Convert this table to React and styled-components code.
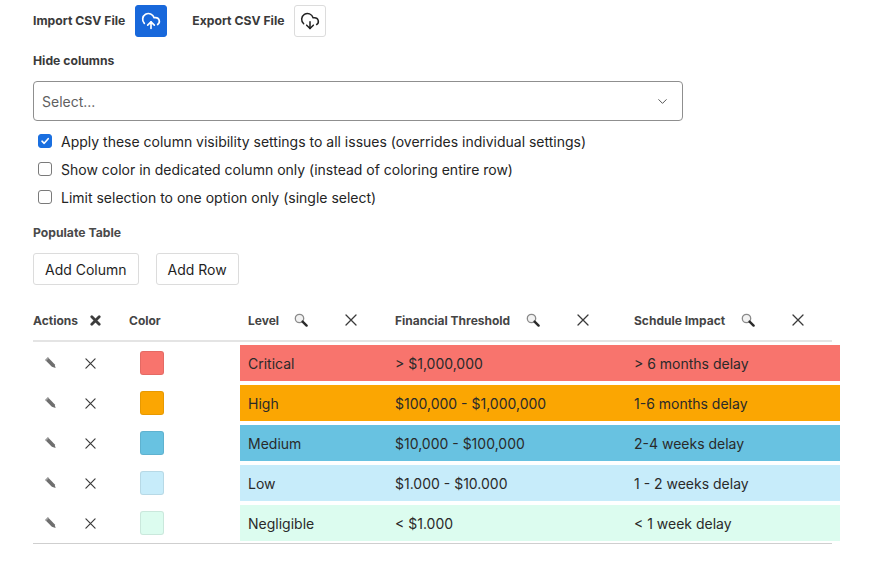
import React from "react";
import styled, { createGlobalStyle } from "styled-components";
import { CloudUpload, CloudDownload, ChevronDown } from "lucide-react";

const Global = createGlobalStyle`
  html, body { margin: 0; padding: 0; background: #fff; }
  body { font-family: Inter, "Noto Sans", sans-serif; color: #2b2b2b; }
  * { box-sizing: border-box; }
`;

const Page = styled.div`
  padding: 5px 0 0 33px;
  width: 886px;
`;

const TopBar = styled.div`
  display: flex;
  align-items: center;
  height: 32px;
`;

const SmallLabel = styled.div`
  font-size: 12.2px;
  font-weight: 700;
  color: ${(p) => (p.$muted ? "#4a4a4a" : "#3a3a3a")};
  line-height: 16px;
  margin-top: ${(p) => p.$mt || 0}px;
`;

const IconButton = styled.button`
  width: 32px;
  height: 32px;
  margin: 0 25px 0 10px;
  padding: 0;
  display: flex;
  align-items: center;
  justify-content: center;
  border-radius: 3px;
  border: 1px solid ${(p) => (p.$primary ? "#1868db" : "#dcdcdc")};
  background: ${(p) => (p.$primary ? "#1868db" : "#fff")};
  color: ${(p) => (p.$primary ? "#fff" : "#222")};
`;

const SelectBox = styled.div`
  margin-top: 12px;
  width: 650px;
  height: 40px;
  border: 1px solid #8f8f8f;
  border-radius: 4px;
  display: flex;
  align-items: center;
  justify-content: space-between;
  padding: 0 12px 0 8px;
  font-size: 14px;
  color: #5f5f5f;
`;

const CheckList = styled.div`
  margin-top: 6px;
  display: flex;
  flex-direction: column;
`;

const CheckRow = styled.label`
  display: flex;
  align-items: center;
  height: 28px;
  padding-left: 5px;
  font-size: 14px;
  color: #242424;
`;

const Box = styled.span`
  width: 14px;
  height: 14px;
  border-radius: 3px;
  margin-right: 9px;
  display: flex;
  align-items: center;
  justify-content: center;
  border: 1px solid ${(p) => (p.$checked ? "#1a6fe0" : "#7a7a7a")};
  background: ${(p) => (p.$checked ? "#1a6fe0" : "#fff")};
`;

const ButtonRow = styled.div`
  margin-top: 12px;
  display: flex;
  gap: 17px;
`;

const Button = styled.button`
  height: 32px;
  padding: 0 11px;
  font-family: Inter, sans-serif;
  font-size: 14px;
  color: #1f1f1f;
  background: #fff;
  border: 1px solid #dcdcdc;
  border-radius: 3px;
`;

const Table = styled.div`
  margin-top: 15px;
  width: 799px;
  border-bottom: 1.5px solid #cfcfcf;
`;

const cols = "47px 49px 111px 147px 239px 214px";

const HeaderRow = styled.div`
  display: grid;
  grid-template-columns: ${cols};
  height: 42px;
  align-items: center;
  border-bottom: 2px solid #e4e4e4;
  width: 799px;
`;

const HeadCell = styled.div`
  display: flex;
  align-items: center;
  padding-left: ${(p) => p.$pl || 0}px;
  font-size: 12px;
  font-weight: 700;
  color: #454545;
  white-space: nowrap;
`;

const Body = styled.div`
  padding-top: 1px;
`;

const Row = styled.div`
  display: grid;
  grid-template-columns: ${cols};
  width: 807px;
  padding: 2px 0;
`;

const Cell = styled.div`
  height: 36px;
  display: flex;
  align-items: center;
  padding-left: ${(p) => p.$pl || 0}px;
  background: ${(p) => p.$bg || "transparent"};
  font-size: 14px;
  color: #2a2a2a;
`;

const Swatch = styled.div`
  width: 24px;
  height: 24px;
  border-radius: 3px;
  background: ${(p) => p.$bg};
  border: 1px solid rgba(0, 0, 0, 0.08);
`;

const SearchWrap = styled.span`
  display: flex;
  margin-left: ${(p) => p.$ml}px;
`;

const CloseWrap = styled.span`
  display: flex;
  margin-left: 37px;
`;

const Search = () => (
  <svg width="14" height="14" viewBox="0 0 14 14">
    <circle cx="5.5" cy="5.5" r="4.2" fill="#f2f2f2" stroke="#8a8a8a" strokeWidth="1.3" />
    <line x1="8.6" y1="8.6" x2="12.6" y2="12.6" stroke="#2a2a2a" strokeWidth="2.4" strokeLinecap="round" />
  </svg>
);

const ThinX = ({ size = 12, color = "#3a3a3a" }) => (
  <svg width={size} height={size} viewBox="0 0 12 12">
    <path d="M1 1 L11 11 M11 1 L1 11" stroke={color} strokeWidth="1.3" strokeLinecap="round" />
  </svg>
);

const HeavyX = () => (
  <svg width="11" height="11" viewBox="0 0 11 11">
    <path d="M1.8 1.8 L9.2 9.2 M9.2 1.8 L1.8 9.2" stroke="#3d3d3d" strokeWidth="2.8" strokeLinecap="round" />
  </svg>
);

const Pencil = () => (
  <svg width="11" height="12" viewBox="0 0 11 12">
    <path d="M0.2 3 L2.9 0.3 L9.6 7.2 L10.6 11 L6.9 9.8 Z" fill="#6e6e6e" />
    <path d="M0.2 3 L2.9 0.3 L3.9 1.3 L1.2 4 Z" fill="#a0a0a0" />
  </svg>
);

const rows = [
  { level: "Critical", fin: "> $1,000,000", sch: "> 6 months delay", color: "#f8746d" },
  { level: "High", fin: "$100,000 - $1,000,000", sch: "1-6 months delay", color: "#fba602" },
  { level: "Medium", fin: "$10,000 - $100,000", sch: "2-4 weeks delay", color: "#68c2e1" },
  { level: "Low", fin: "$1.000 - $10.000", sch: "1 - 2 weeks delay", color: "#c7ecfa" },
  { level: "Negligible", fin: "< $1.000", sch: "< 1 week delay", color: "#dcfcef" },
];

const checks = [
  { text: "Apply these column visibility settings to all issues (overrides individual settings)", checked: true },
  { text: "Show color in dedicated column only (instead of coloring entire row)", checked: false },
  { text: "Limit selection to one option only (single select)", checked: false },
];

const ColHead = ({ label, ml }) => (
  <HeadCell $pl={8}>
    {label}
    <SearchWrap $ml={ml}><Search /></SearchWrap>
    <CloseWrap><ThinX /></CloseWrap>
  </HeadCell>
);

export default function App() {
  return (
    <Page>
      <Global />
      <TopBar>
        <SmallLabel>Import CSV File</SmallLabel>
        <IconButton $primary><CloudUpload size={20} strokeWidth={2} /></IconButton>
        <SmallLabel>Export CSV File</SmallLabel>
        <IconButton><CloudDownload size={20} strokeWidth={1.8} /></IconButton>
      </TopBar>
      <SmallLabel $mt={16}>Hide columns</SmallLabel>
      <SelectBox>
        <span>Select...</span>
        <ChevronDown size={15} color="#555" strokeWidth={1.6} />
      </SelectBox>
      <CheckList>
        {checks.map((c) => (
          <CheckRow key={c.text}>
            <Box $checked={c.checked}>
              {c.checked && (
                <svg width="10" height="10" viewBox="0 0 10 10">
                  <path d="M2 5.2 L4.2 7.3 L8.2 2.7" fill="none" stroke="#fff" strokeWidth="1.6" strokeLinecap="round" strokeLinejoin="round" />
                </svg>
              )}
            </Box>
            {c.text}
          </CheckRow>
        ))}
      </CheckList>
      <SmallLabel $mt={14} $muted>Populate Table</SmallLabel>
      <ButtonRow>
        <Button>Add Column</Button>
        <Button>Add Row</Button>
      </ButtonRow>
      <Table>
        <HeaderRow>
          <HeadCell>Actions</HeadCell>
          <HeadCell $pl={10}><HeavyX /></HeadCell>
          <HeadCell>Color</HeadCell>
          <ColHead label="Level" ml={15} />
          <ColHead label="Financial Threshold" ml={16} />
          <ColHead label="Schdule Impact" ml={16} />
        </HeaderRow>
        <Body>
          {rows.map((r) => (
            <Row key={r.level}>
              <Cell $pl={12}><Pencil /></Cell>
              <Cell $pl={5}><ThinX size={11} /></Cell>
              <Cell $pl={11}><Swatch $bg={r.color} /></Cell>
              <Cell $pl={8} $bg={r.color}>{r.level}</Cell>
              <Cell $pl={8} $bg={r.color}>{r.fin}</Cell>
              <Cell $pl={8} $bg={r.color}>{r.sch}</Cell>
            </Row>
          ))}
        </Body>
      </Table>
    </Page>
  );
}
